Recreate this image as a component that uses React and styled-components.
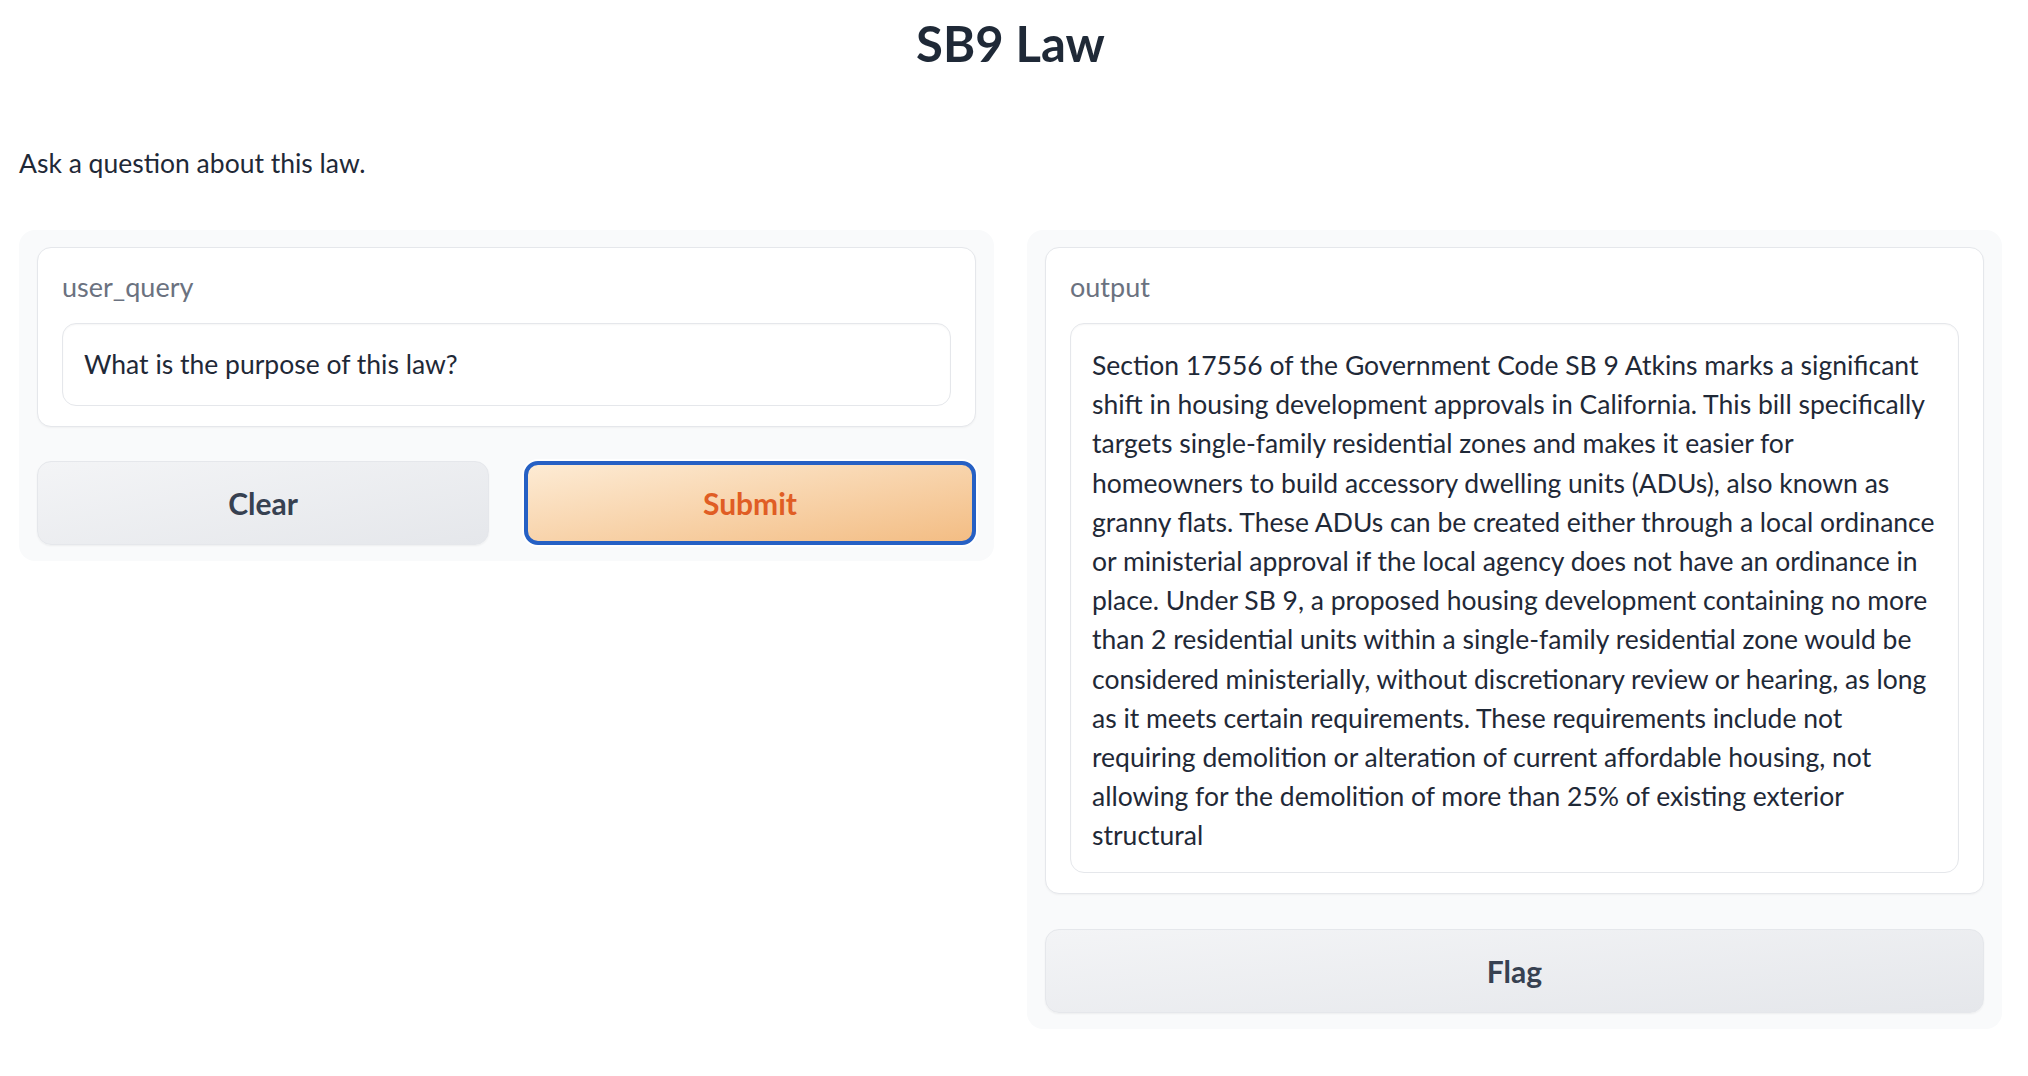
import React from 'react'
import styled, { createGlobalStyle } from 'styled-components'

const GlobalStyle = createGlobalStyle`
  * {
    box-sizing: border-box;
  }
  body {
    margin: 0;
    background: #ffffff;
    font-family: Lato, 'Open Sans', sans-serif;
    color: #1f2937;
  }
`

const Page = styled.div`
  padding: 13px 26px 40px 19px;
`

const Title = styled.h1`
  margin: 0;
  text-align: center;
  font-size: 49px;
  line-height: 60px;
  font-weight: 700;
  color: #1f2937;
`

const Description = styled.p`
  margin: 71px 0 47px;
  font-size: 26.5px;
  line-height: 39px;
  color: #1f2937;
`

const Columns = styled.div`
  display: grid;
  grid-template-columns: 1fr 1fr;
  gap: 33px;
  align-items: start;
`

const Panel = styled.div`
  display: flex;
  flex-direction: column;
  gap: ${(p) => p.$gap || 34}px;
  padding: 17px 18px 16px;
  background: #f9fafb;
  border-radius: 16px;
`

const Card = styled.div`
  display: flex;
  flex-direction: column;
  gap: 19px;
  padding: 22px 24px 20px;
  background: #ffffff;
  border: 1px solid #e5e7eb;
  border-radius: 14px;
  box-shadow: 0 1px 2px rgba(0, 0, 0, 0.04);
`

const Label = styled.span`
  font-size: 27px;
  line-height: 34px;
  color: #6b7280;
`

const Field = styled.div`
  padding: ${(p) => (p.$multi ? '22px 21px 16px' : '21px 21px')};
  border: 1px solid #e5e7eb;
  border-radius: 14px;
  background: #ffffff;
  box-shadow: inset 0 1px 2px rgba(0, 0, 0, 0.04);
  font-size: 26.5px;
  line-height: 39.2px;
  color: #1f2937;
  white-space: pre;
`

const ButtonRow = styled.div`
  display: grid;
  grid-template-columns: 1fr 1fr;
  gap: 35px;
`

const Button = styled.button`
  height: 84px;
  border-radius: 14px;
  font-family: Lato, 'Open Sans', sans-serif;
  font-size: 30px;
  font-weight: 700;
  cursor: pointer;
  ${(p) =>
    p.$primary
      ? `
    background: linear-gradient(to bottom right, #fdebd4, #f3bd84);
    border: 4px solid #2660c4;
    color: #e05d24;
    box-shadow: 0 0 0 2px #ffffff;
  `
      : `
    background: linear-gradient(to bottom right, #f3f4f6, #e5e7eb);
    border: 1px solid #e5e7eb;
    color: #374151;
    box-shadow: 0 1px 2px rgba(0, 0, 0, 0.05);
  `}
`

const answer = [
  'Section 17556 of the Government Code SB 9 Atkins marks a significant',
  'shift in housing development approvals in California. This bill specifically',
  'targets single-family residential zones and makes it easier for',
  'homeowners to build accessory dwelling units (ADUs), also known as',
  'granny flats. These ADUs can be created either through a local ordinance',
  'or ministerial approval if the local agency does not have an ordinance in',
  'place. Under SB 9, a proposed housing development containing no more',
  'than 2 residential units within a single-family residential zone would be',
  'considered ministerially, without discretionary review or hearing, as long',
  'as it meets certain requirements. These requirements include not',
  'requiring demolition or alteration of current affordable housing, not',
  'allowing for the demolition of more than 25% of existing exterior',
  'structural',
].join('\n')

export default function App() {
  return (
    <>
      <GlobalStyle />
      <Page>
        <Title>SB9 Law</Title>
        <Description>Ask a question about this law.</Description>
        <Columns>
          <Panel>
            <Card>
              <Label>user_query</Label>
              <Field>What is the purpose of this law?</Field>
            </Card>
            <ButtonRow>
              <Button>Clear</Button>
              <Button $primary>Submit</Button>
            </ButtonRow>
          </Panel>
          <Panel $gap={35}>
            <Card>
              <Label>output</Label>
              <Field $multi>{answer}</Field>
            </Card>
            <Button>Flag</Button>
          </Panel>
        </Columns>
      </Page>
    </>
  )
}
